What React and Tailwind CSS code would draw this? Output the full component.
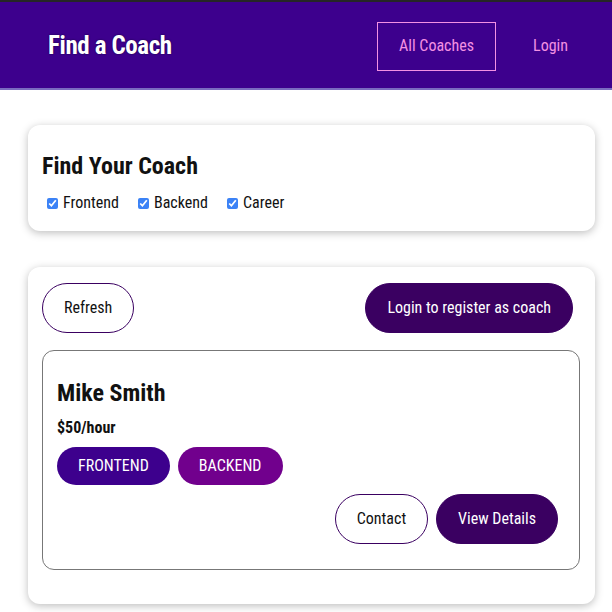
import React from "react";

export default function App() {
  const font = { fontFamily: "Roboto, 'Noto Sans', sans-serif" };
  return (
    <div className="min-h-[612px] bg-white [font-stretch:85%]" style={font}>
      <header className="h-[90px] bg-[#3d008d] border-t-2 border-t-[#262626] border-b-2 border-b-[#7a6bc0] flex items-center justify-between pt-[2px] pl-[48px] pr-[44px]">
        <h1 className="text-[25px] font-bold tracking-[-0.4px] text-white [text-shadow:0_0_2px_#14003a]">Find a Coach</h1>
        <nav className="flex items-center gap-[37px]">
          <a className="h-[49px] w-[119px] border border-[#f391e3] flex items-center justify-center text-[#f391e3] text-[16px]">All Coaches</a>
          <a className="text-[#f391e3] text-[16px]">Login</a>
        </nav>
      </header>

      <div className="pl-[28px] w-[595px] pt-[35px] flex flex-col gap-[36px]">
        <section className="rounded-[12px] bg-white shadow-[0_2px_8px_rgba(0,0,0,0.26)] px-[14px] pt-[26px] pb-[16px]">
          <h2 className="text-[24px] font-bold text-[#111] leading-[30px]">Find Your Coach</h2>
          <div className="flex items-center mt-[10px] text-[16px] text-[#111]">
            {["Frontend", "Backend", "Career"].map((t) => (
              <label key={t} className="flex items-center mr-[14px]">
                <input type="checkbox" defaultChecked className="w-[11px] h-[11px] ml-[5px] mr-[5px] accent-[#3b82f6]" />
                {t}
              </label>
            ))}
          </div>
        </section>

        <section className="rounded-[12px] bg-white shadow-[0_2px_8px_rgba(0,0,0,0.26)] pl-[14px] pr-[15px] pt-[16px] pb-[34px]">
          <div className="flex justify-between items-center">
            <button className="h-[50px] px-[21px] rounded-full border border-[#3a0061] text-[16px] text-[#111]">Refresh</button>
            <button className="h-[50px] px-[21px] mr-[7px] rounded-full border border-[#3a0061] bg-[#3a0061] text-white text-[16px]">Login to register as coach</button>
          </div>
          <div className="mt-[17px] rounded-[12px] border border-[#777] px-[14px] pt-[27px] pb-[25px]">
            <h3 className="text-[24px] font-bold text-[#111] leading-[30px]">Mike Smith</h3>
            <p className="text-[16px] font-bold text-[#111] mt-[8px]">$50/hour</p>
            <div className="flex gap-[8px] mt-[7px]">
              <span className="h-[38px] px-[21px] rounded-full bg-[#3d008d] text-white text-[16px] flex items-center">FRONTEND</span>
              <span className="h-[38px] px-[21px] rounded-full bg-[#71008d] text-white text-[16px] flex items-center">BACKEND</span>
            </div>
            <div className="flex justify-end gap-[8px] mt-[9px] pr-[7px]">
              <button className="h-[50px] px-[21px] rounded-full border border-[#3a0061] text-[16px] text-[#111]">Contact</button>
              <button className="h-[50px] px-[21px] rounded-full border border-[#3a0061] bg-[#3a0061] text-white text-[16px]">View Details</button>
            </div>
          </div>
        </section>
      </div>
    </div>
  );
}
